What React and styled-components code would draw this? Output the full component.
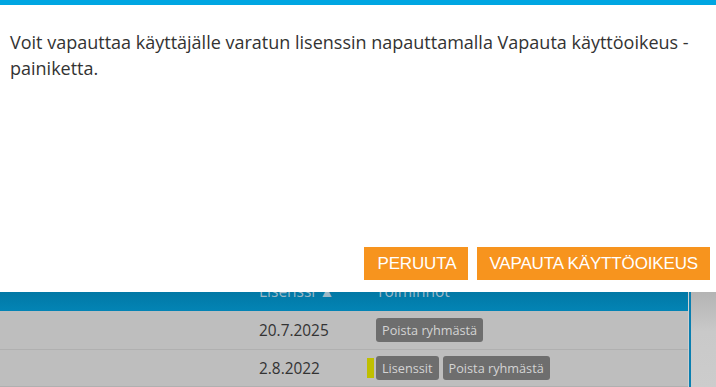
import styled, { createGlobalStyle } from "styled-components";

const Global = createGlobalStyle`
  html, body {
    margin: 0;
    padding: 0;
    width: 716px;
    height: 387px;
    overflow: hidden;
    background: #bebebe;
  }
`;

const Page = styled.div`
  position: relative;
  width: 716px;
  height: 387px;
  overflow: hidden;
  display: flex;
  padding-top: 272px;
  box-sizing: border-box;
  font-family: "Open Sans", sans-serif;
`;

const TableArea = styled.div`
  width: 688px;
  display: flex;
  flex-direction: column;
  border-right: 1px solid #d0d0d0;
`;

const SidePanel = styled.div`
  flex: 1;
  border-left: 2px solid #0a7fb0;
  background: linear-gradient(#a9a9a9, #c9c9c9 60px, #cccccc);
`;

const HeaderRow = styled.div`
  height: 40px;
  display: flex;
  align-items: flex-end;
  padding-bottom: 9px;
  box-sizing: border-box;
  background: linear-gradient(#006c94, #0384b5);
  color: #9cb8c6;
  font-size: 15.5px;
`;

const Row = styled.div`
  height: ${(p) => p.h}px;
  display: flex;
  align-items: center;
  border-bottom: 1px solid #b0b0b0;
  background: #bebebe;
  color: #333;
  font-size: 15.4px;
`;

const DateCell = styled.div`
  width: 117px;
  margin-left: 259px;
`;

const Actions = styled.div`
  display: flex;
  gap: 4px;
  position: relative;
`;

const Marker = styled.span`
  position: absolute;
  left: -9px;
  top: 2px;
  width: 7px;
  height: 20px;
  background: #bfbf00;
`;

const SmallButton = styled.span`
  display: inline-block;
  background: #6e6e6e;
  color: #d4d4d4;
  border-radius: 3px;
  font-size: 12.7px;
  line-height: 24px;
  padding: 0 6px;
`;

const Modal = styled.div`
  position: absolute;
  top: 0;
  left: 0;
  width: 716px;
  height: 292px;
  background: #fff;
  border-top: 5px solid #00a6e2;
  box-sizing: border-box;
  display: flex;
  flex-direction: column;
  justify-content: space-between;
`;

const Message = styled.p`
  margin: 0;
  padding: 24px 10px 0 10px;
  font-family: "Open Sans", sans-serif;
  font-size: 18px;
  line-height: 26px;
  color: #333;
`;

const Buttons = styled.div`
  display: flex;
  justify-content: flex-end;
  gap: 9px;
  padding: 0 6px 12px 0;
`;

const OrangeButton = styled.button`
  border: none;
  background: #f7941e;
  color: #fff;
  font-family: "Liberation Sans", Arial, sans-serif;
  font-size: 17px;
  height: 33px;
  padding: 0 ${(p) => p.pr}px 0 ${(p) => p.pl}px;
  text-transform: uppercase;
  letter-spacing: -0.15px;
`;

export default function App() {
  return (
    <>
      <Global />
      <Page>
        <TableArea>
          <HeaderRow>
            <DateCell>Lisenssi ▲</DateCell>
            <span>Toiminnot</span>
          </HeaderRow>
          <Row h={39}>
            <DateCell>20.7.2025</DateCell>
            <Actions>
              <SmallButton>Poista ryhmästä</SmallButton>
            </Actions>
          </Row>
          <Row h={37}>
            <DateCell>2.8.2022</DateCell>
            <Actions>
              <Marker />
              <SmallButton>Lisenssit</SmallButton>
              <SmallButton>Poista ryhmästä</SmallButton>
            </Actions>
          </Row>
        </TableArea>
        <SidePanel />
        <Modal>
          <Message>
            Voit vapauttaa käyttäjälle varatun lisenssin napauttamalla Vapauta käyttöoikeus -
            painiketta.
          </Message>
          <Buttons>
            <OrangeButton pl={13} pr={12}>Peruuta</OrangeButton>
            <OrangeButton pl={12} pr={12}>Vapauta käyttöoikeus</OrangeButton>
          </Buttons>
        </Modal>
      </Page>
    </>
  );
}
